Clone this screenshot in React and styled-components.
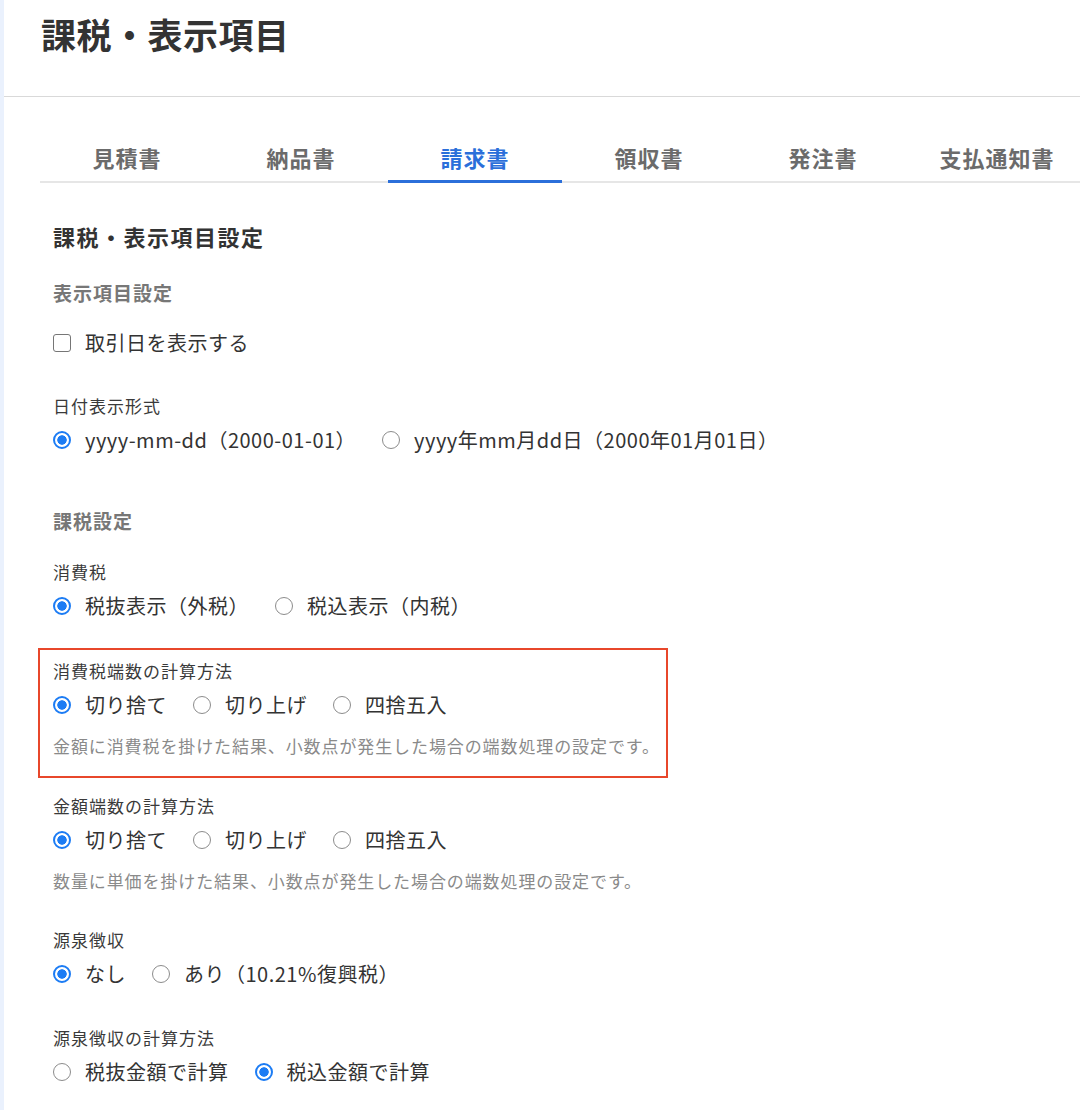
import React from 'react';
import styled, { createGlobalStyle } from 'styled-components';

const GlobalStyle = createGlobalStyle`
  html, body {
    margin: 0;
    padding: 0;
    background: #fff;
  }
  body {
    font-family: "Noto Sans CJK JP", "Noto Sans", sans-serif;
    color: #333;
  }
`;

const Page = styled.div`
  min-height: 1110px;
  border-left: 4px solid #eaf1fd;
  box-sizing: border-box;
  overflow: hidden;
`;

const Header = styled.header`
  height: 97px;
  box-sizing: border-box;
  padding: 9px 0 0 37px;
  border-bottom: 1px solid #d9d9d9;
`;

const Title = styled.h1`
  margin: 0;
  font-size: 35px;
  line-height: 49px;
  font-weight: 700;
  letter-spacing: 0.5px;
  color: #333;
`;

const TabBar = styled.nav`
  display: flex;
  margin: 44px 0 0 36px;
  border-bottom: 2px solid #e6e6e6;
`;

const Tab = styled.div`
  flex: 0 0 174px;
  text-align: center;
  font-size: 22px;
  line-height: 32px;
  font-weight: 700;
  letter-spacing: 1px;
  color: ${p => (p.$active ? '#2b6fda' : '#6b6b6b')};
  padding-bottom: 7px;
  border-bottom: 3px solid ${p => (p.$active ? '#2b6fda' : 'transparent')};
  margin-bottom: -2px;
`;

const Content = styled.main`
  padding: 37px 0 40px 49px;
`;

const SectionTitle = styled.h2`
  margin: 0;
  font-size: 22px;
  line-height: 32px;
  font-weight: 700;
  letter-spacing: 1.5px;
  color: #333;
`;

const SubTitle = styled.h3`
  margin: ${p => p.$top}px 0 0;
  font-size: 19px;
  line-height: 28px;
  font-weight: 700;
  letter-spacing: 1px;
  color: #777;
`;

const Field = styled.div`
  margin-top: ${p => p.$top}px;
`;

const FieldLabel = styled.div`
  font-size: 17px;
  line-height: 26px;
  letter-spacing: 1px;
  color: #3a3a3a;
`;

const Options = styled.div`
  display: flex;
  align-items: center;
  margin-top: 6px;
  height: 30px;
`;

const Option = styled.label`
  display: inline-flex;
  align-items: center;
  gap: 14px;
  margin-right: 26px;
  font-size: 20px;
  line-height: 30px;
  letter-spacing: 0.5px;
  color: #333;
  white-space: nowrap;
`;

const RadioMark = styled.span`
  flex: 0 0 auto;
  width: 18px;
  height: 18px;
  box-sizing: border-box;
  border-radius: 50%;
  border: ${p => (p.$checked ? '2.5px solid #1c7cf4' : '1.5px solid #8c8c8c')};
  background: ${p =>
    p.$checked
      ? 'radial-gradient(circle, #1c7cf4 0 4.4px, #fff 5px)'
      : '#fff'};
`;

const CheckBox = styled.span`
  flex: 0 0 auto;
  width: 18px;
  height: 18px;
  box-sizing: border-box;
  border: 1.5px solid #767676;
  border-radius: 3px;
  background: #fff;
`;

const CheckRow = styled(Option)`
  margin-top: 21px;
`;

const Help = styled.p`
  margin: 13px 0 0;
  font-size: 17px;
  line-height: 26px;
  letter-spacing: 0.9px;
  color: #8a8a8a;
  white-space: nowrap;
`;

const Highlight = styled.div`
  width: 630px;
  box-sizing: border-box;
  margin: 27px 0 -20px -15px;
  padding: 8px 13px 17px;
  border: 2px solid #e8472b;
`;

const tabs = ['見積書', '納品書', '請求書', '領収書', '発注書', '支払通知書'];

function RadioGroup({ options, value }) {
  return (
    <Options>
      {options.map((o, i) => (
        <Option key={o}>
          <RadioMark $checked={i === value} />
          {o}
        </Option>
      ))}
    </Options>
  );
}

function SettingField({ label, options, value, help, top }) {
  return (
    <Field $top={top}>
      <FieldLabel>{label}</FieldLabel>
      <RadioGroup options={options} value={value} />
      {help && <Help>{help}</Help>}
    </Field>
  );
}

const rounding = ['切り捨て', '切り上げ', '四捨五入'];

export default function App() {
  return (
    <>
      <GlobalStyle />
      <Page>
        <Header>
          <Title>課税・表示項目</Title>
        </Header>

        <TabBar>
          {tabs.map(t => (
            <Tab key={t} $active={t === '請求書'}>{t}</Tab>
          ))}
        </TabBar>

        <Content>
          <SectionTitle>課税・表示項目設定</SectionTitle>

          <SubTitle $top={27}>表示項目設定</SubTitle>
          <CheckRow>
            <CheckBox />
            取引日を表示する
          </CheckRow>

          <SettingField
            top={35}
            label="日付表示形式"
            options={['yyyy-mm-dd（2000-01-01）', 'yyyy年mm月dd日（2000年01月01日）']}
            value={0}
          />

          <SubTitle $top={52}>課税設定</SubTitle>

          <SettingField
            top={24}
            label="消費税"
            options={['税抜表示（外税）', '税込表示（内税）']}
            value={0}
          />

          <Highlight>
            <SettingField
              top={0}
              label="消費税端数の計算方法"
              options={rounding}
              value={0}
              help="金額に消費税を掛けた結果、小数点が発生した場合の端数処理の設定です。"
            />
          </Highlight>

          <SettingField
            top={35}
            label="金額端数の計算方法"
            options={rounding}
            value={0}
            help="数量に単価を掛けた結果、小数点が発生した場合の端数処理の設定です。"
          />

          <SettingField
            top={33}
            label="源泉徴収"
            options={['なし', 'あり（10.21%復興税）']}
            value={0}
          />

          <SettingField
            top={36}
            label="源泉徴収の計算方法"
            options={['税抜金額で計算', '税込金額で計算']}
            value={1}
          />
        </Content>
      </Page>
    </>
  );
}
